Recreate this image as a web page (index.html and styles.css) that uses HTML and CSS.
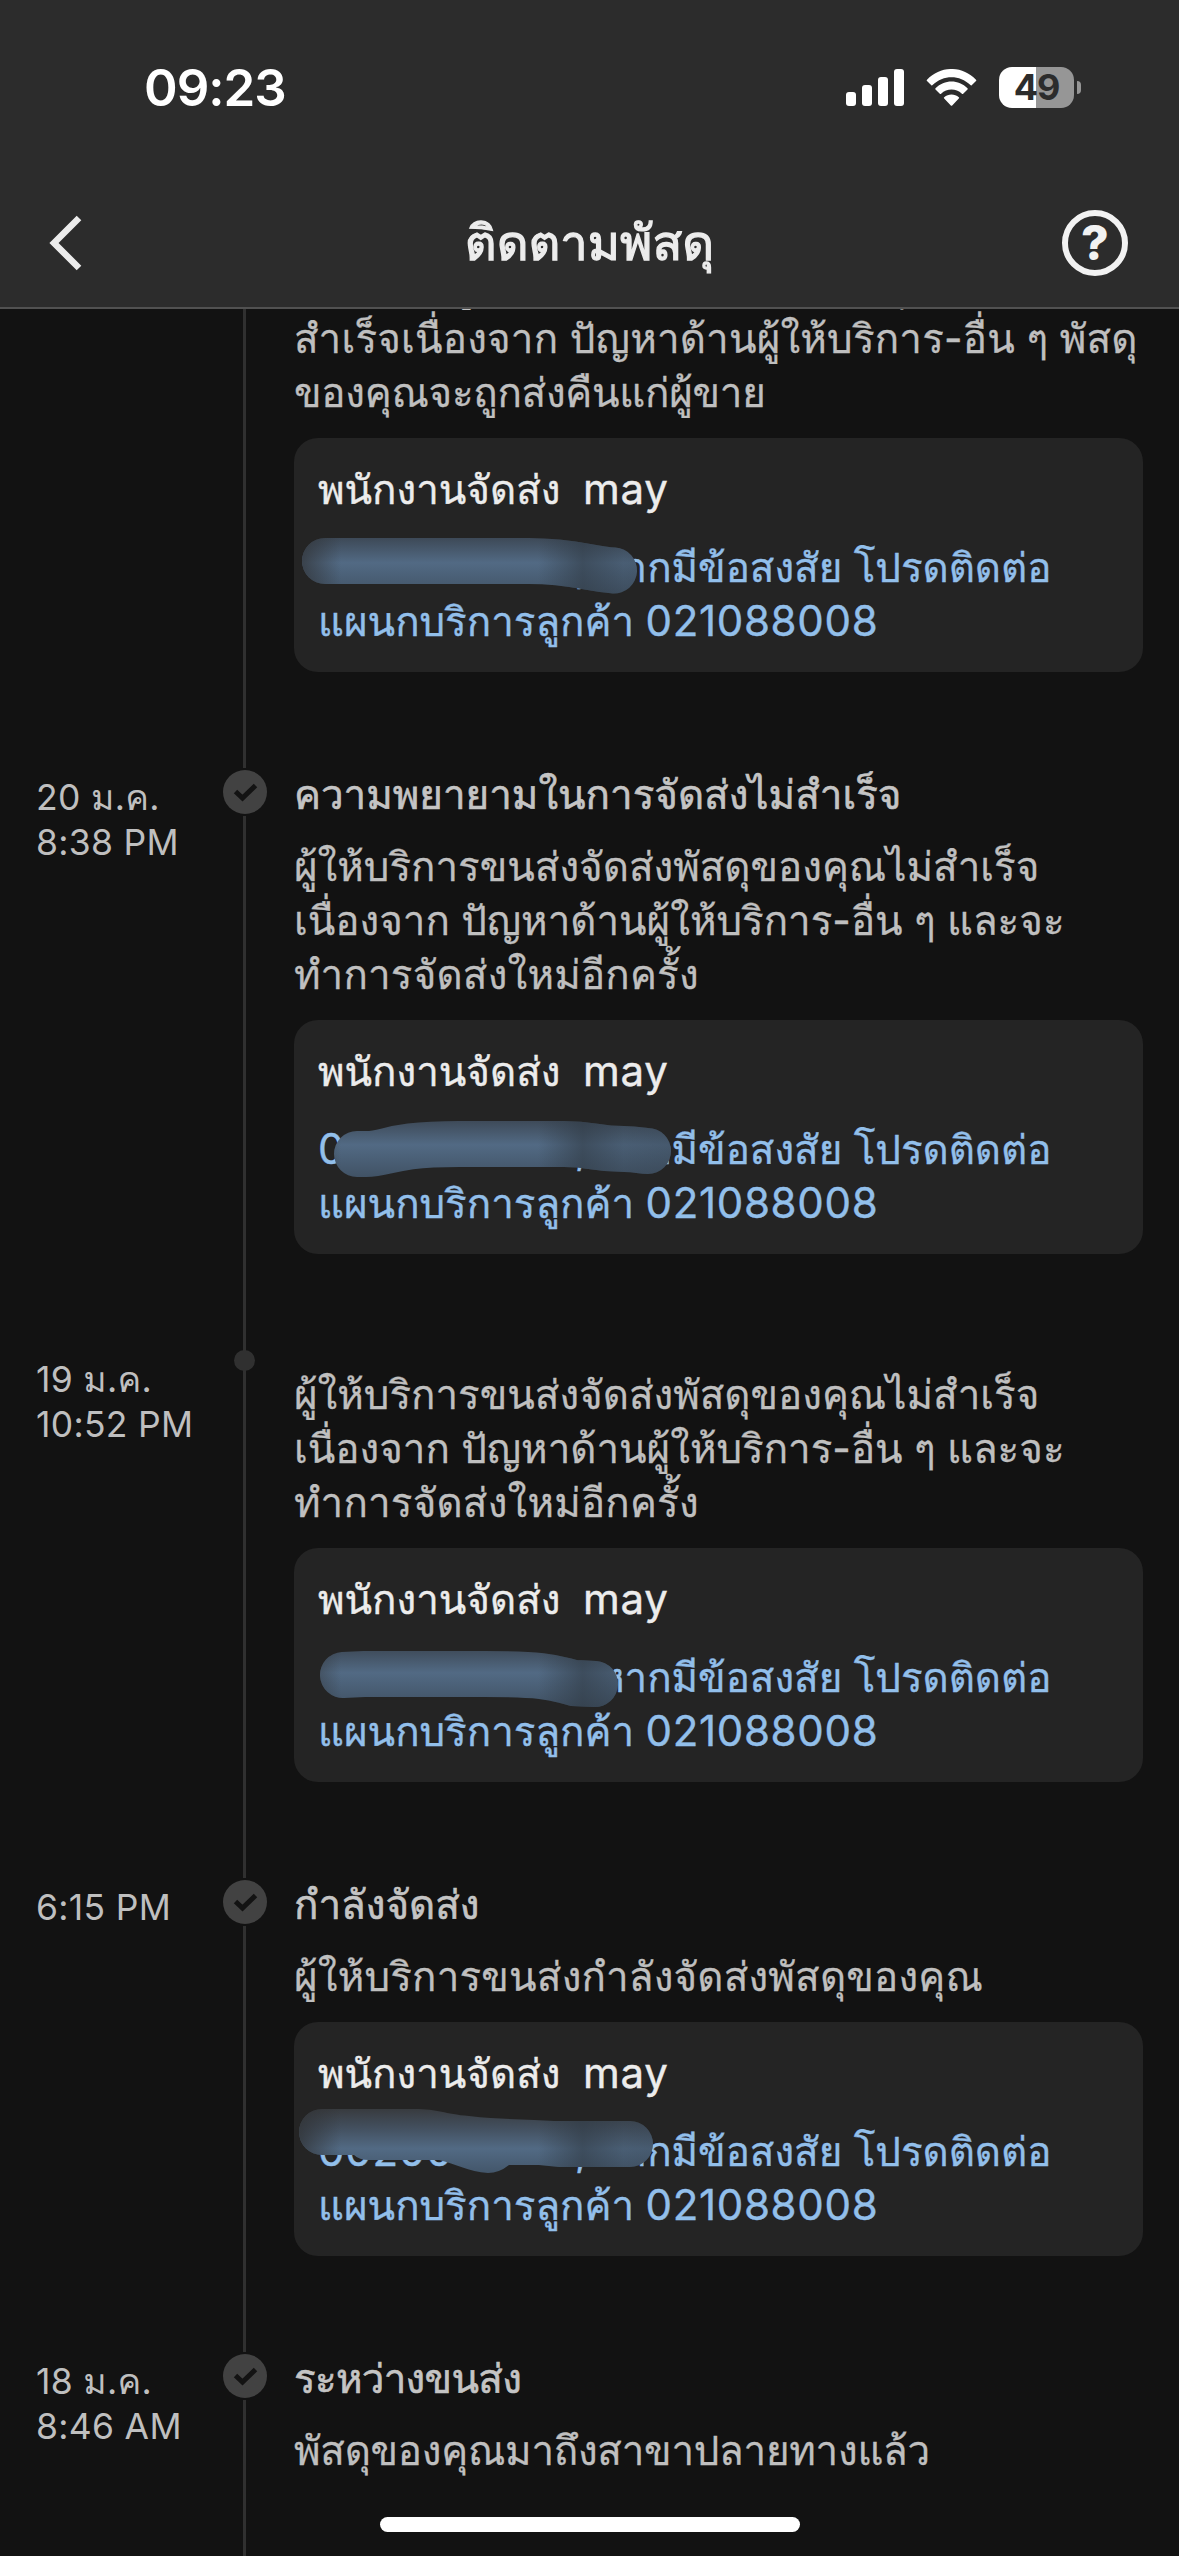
FILE: index.html
```html
<!DOCTYPE html>
<html lang="th">
<head>
<meta charset="utf-8">
<title>ติดตามพัสดุ</title>
<link rel="stylesheet" href="styles.css">
</head>
<body>
<svg class="defs" width="0" height="0" aria-hidden="true">
  <defs>
    <linearGradient id="tint" gradientUnits="userSpaceOnUse" x1="0" y1="96" x2="0" y2="160">
      <stop offset="0" stop-color="#3a4450"/>
      <stop offset=".45" stop-color="#526a84"/>
      <stop offset="1" stop-color="#3f5062"/>
    </linearGradient>
    <linearGradient id="tint-tall" gradientUnits="userSpaceOnUse" x1="0" y1="87" x2="0" y2="151">
      <stop offset="0" stop-color="#383b3f"/>
      <stop offset=".3" stop-color="#43505f"/>
      <stop offset=".62" stop-color="#526a84"/>
      <stop offset="1" stop-color="#43566a"/>
    </linearGradient>
    <linearGradient id="shade" gradientUnits="userSpaceOnUse" x1="6" y1="0" x2="378" y2="0">
      <stop offset="0" stop-color="#303235" stop-opacity=".75"/>
      <stop offset=".11" stop-color="#303235" stop-opacity="0"/>
      <stop offset=".64" stop-color="#303a44" stop-opacity="0"/>
      <stop offset=".76" stop-color="#303a44" stop-opacity=".6"/>
      <stop offset=".87" stop-color="#303a44" stop-opacity=".25"/>
      <stop offset="1" stop-color="#303a44" stop-opacity=".35"/>
    </linearGradient>
  </defs>
</svg>

<div class="screen">
  <header class="header">
    <div class="status">
      <span class="clock">09:23</span>
      <span class="indicators">
        <svg class="signal" width="58" height="37" viewBox="0 0 58 37" fill="#fff">
          <rect x="0" y="23" width="10" height="14" rx="3"/>
          <rect x="16" y="16" width="10" height="21" rx="3"/>
          <rect x="32" y="8" width="10" height="29" rx="3"/>
          <rect x="48" y="0" width="10" height="37" rx="3"/>
        </svg>
        <svg class="wifi" width="51" height="37" viewBox="0 0 51 37" fill="#fff">
          <path d="M1 10.7C14.6-3.6 36.4-3.6 50 10.7Q50.6 11.4 50 12L45.7 16.2Q45 16.7 44.4 16.1C33.8 5.6 17.2 5.6 6.6 16.1Q6 16.7 5.3 16.2L1 12Q.4 11.4 1 10.7Z"/>
          <path d="M9.500 19.300C18.400 10.300 32.600 10.300 41.500 19.300Q42.100 20 41.500 20.600L37.200 24.800Q36.500 25.400 35.900 24.800C30 19.200 21 19.200 15.100 24.800Q14.500 25.400 13.800 24.800L9.500 20.600Q8.900 20 9.500 19.300Z"/>
          <path d="M18.200 28.200C22.300 24.600 28.700 24.600 32.800 28.200Q33.500 28.800 32.800 29.500L26.200 36.400Q25.500 37.100 24.800 36.400L18.200 29.500Q17.500 28.800 18.200 28.200Z"/>
        </svg>
        <span class="battery"><span class="battery-body">49</span><span class="battery-tip"></span></span>
      </span>
    </div>
    <nav class="nav">
      <svg class="back" width="36" height="56" viewBox="0 0 36 56" fill="none" stroke="#ececec" stroke-width="6.500"><path d="M32 3L7 28L32 53"/></svg>
      <h1 class="heading">ติดตามพัสดุ</h1>
      <span class="help">?</span>
    </nav>
  </header>

  <main class="timeline">
    <section class="event first">
      <div class="date"></div>
      <div class="rail"></div>
      <div class="content">
        <p class="text">เนื่องจากผู้ให้บริการขนส่งจัดส่งพัสดุไม่<br><span class="loose">สำเร็จเนื่องจาก ปัญหาด้านผู้ให้บริการ-อื่น ๆ พัสดุ</span><br><span class="tight">ของคุณจะถูกส่งคืนแก่ผู้ขาย</span></p>
        <div class="card">
          <p class="name">พนักงานจัดส่ง&nbsp; <span class="latin">may</span></p>
          <p class="contact"><span class="latin phone"></span>, หากมีข้อสงสัย โปรดติดต่อ<br>แผนกบริการลูกค้า <span class="latin">021088008</span></p>
          <svg class="smudge" viewBox="0 0 849 234" fill="none" stroke-width="46" stroke-linecap="round">
            <path stroke="url(#tint)" d="M31 123H235C280 123 295 131 320 132.500"/>
            <path stroke="url(#shade)" d="M31 123H235C280 123 295 131 320 132.500"/>
          </svg>
        </div>
      </div>
    </section>

    <section class="event">
      <div class="date">20 ม.ค.<br>8:38 PM</div>
      <div class="rail"><span class="check"><svg width="44" height="44" viewBox="0 0 44 44" fill="none" stroke="#131313" stroke-width="5"><path d="M12.500 21.500L19.500 28L32.500 15.500"/></svg></span></div>
      <div class="content">
        <h2 class="title">ความพยายามในการจัดส่งไม่สำเร็จ</h2>
        <p class="text">ผู้ให้บริการขนส่งจัดส่งพัสดุของคุณไม่สำเร็จ<br>เนื่องจาก ปัญหาด้านผู้ให้บริการ-อื่น ๆ และจะ<br><span class="loose">ทำการจัดส่งใหม่อีกครั้ง</span></p>
        <div class="card">
          <p class="name">พนักงานจัดส่ง&nbsp; <span class="latin">may</span></p>
          <p class="contact"><span class="latin phone">0</span>, หากมีข้อสงสัย โปรดติดต่อ<br>แผนกบริการลูกค้า <span class="latin">021088008</span></p>
          <svg class="smudge" viewBox="0 0 849 234" fill="none" stroke-width="46" stroke-linecap="round">
            <path stroke="url(#tint)" d="M63 134H72C95 134 95 124 165 124H270C300 124 300 129 330 129C345 129 346 131 354 131"/>
            <path stroke="url(#shade)" d="M63 134H72C95 134 95 124 165 124H270C300 124 300 129 330 129C345 129 346 131 354 131"/>
          </svg>
        </div>
      </div>
    </section>

    <section class="event minor">
      <div class="date">19 ม.ค.<br>10:52 PM</div>
      <div class="rail"><span class="dot"></span></div>
      <div class="content">
        <p class="text">ผู้ให้บริการขนส่งจัดส่งพัสดุของคุณไม่สำเร็จ<br>เนื่องจาก ปัญหาด้านผู้ให้บริการ-อื่น ๆ และจะ<br><span class="loose">ทำการจัดส่งใหม่อีกครั้ง</span></p>
        <div class="card">
          <p class="name">พนักงานจัดส่ง&nbsp; <span class="latin">may</span></p>
          <p class="contact"><span class="latin phone"></span>, หากมีข้อสงสัย โปรดติดต่อ<br>แผนกบริการลูกค้า <span class="latin">021088008</span></p>
          <svg class="smudge" viewBox="0 0 849 234" fill="none" stroke-width="46" stroke-linecap="round">
            <path stroke="url(#tint)" d="M49 127L70 126H190C260 126 262 131 280 135L301 136"/>
            <path stroke="url(#shade)" d="M49 127L70 126H190C260 126 262 131 280 135L301 136"/>
          </svg>
        </div>
      </div>
    </section>

    <section class="event">
      <div class="date">6:15 PM</div>
      <div class="rail"><span class="check"><svg width="44" height="44" viewBox="0 0 44 44" fill="none" stroke="#131313" stroke-width="5"><path d="M12.500 21.500L19.500 28L32.500 15.500"/></svg></span></div>
      <div class="content">
        <h2 class="title">กำลังจัดส่ง</h2>
        <p class="text"><span class="loose">ผู้ให้บริการขนส่งกำลังจัดส่งพัสดุของคุณ</span></p>
        <div class="card">
          <p class="name">พนักงานจัดส่ง&nbsp; <span class="latin">may</span></p>
          <p class="contact"><span class="latin phone">00200</span>, หากมีข้อสงสัย โปรดติดต่อ<br>แผนกบริการลูกค้า <span class="latin">021088008</span></p>
          <svg class="smudge" viewBox="0 0 849 234">
            <path fill="url(#tint-tall)" d="M28 87H120C145 87 150 92 175 94C200 97 220 97 240 98L260 99H336A23 23 0 0 1 336 145H265L245 143H215Q205 151 194 151C175 150 160 141 145 138H75Q65 138 60 133H28A23 23 0 0 1 28 87Z"/>
            <path fill="url(#shade)" d="M28 87H120C145 87 150 92 175 94C200 97 220 97 240 98L260 99H336A23 23 0 0 1 336 145H265L245 143H215Q205 151 194 151C175 150 160 141 145 138H75Q65 138 60 133H28A23 23 0 0 1 28 87Z"/>
          </svg>
        </div>
      </div>
    </section>

    <section class="event last">
      <div class="date">18 ม.ค.<br>8:46 AM</div>
      <div class="rail"><span class="check"><svg width="44" height="44" viewBox="0 0 44 44" fill="none" stroke="#131313" stroke-width="5"><path d="M12.500 21.500L19.500 28L32.500 15.500"/></svg></span></div>
      <div class="content">
        <h2 class="title"><span class="tighter">ระหว่างขนส่ง</span></h2>
        <p class="text"><span class="tight">พัสดุของคุณมาถึงสาขาปลายทางแล้ว</span></p>
      </div>
    </section>
  </main>
  <div class="home-indicator"></div>
</div>
</body>
</html>
```
FILE: styles.css
```css
* { box-sizing: border-box; }

body {
  margin: 0;
  background: #121212;
  font-family: Inter, Loma, "Noto Sans Thai Looped", sans-serif;
}

h1, h2, p { margin: 0; font-weight: 400; }

svg { display: block; }

.defs { position: absolute; }

.screen {
  position: relative;
  display: flex;
  flex-direction: column;
  width: 1179px;
  height: 2556px;
  overflow: hidden;
}

.header {
  position: relative;
  z-index: 1;
  flex: none;
  height: 309px;
  background: #2c2c2c;
  border-bottom: 2px solid #515151;
}

.status {
  display: flex;
  justify-content: space-between;
  align-items: center;
  height: 175px;
  padding: 0 98px 0 144px;
}

.clock {
  color: #fff;
  font-size: 51px;
  font-weight: 600;
  letter-spacing: -1px;
}

.indicators { display: flex; align-items: center; gap: 22px; }

.battery { display: flex; align-items: center; gap: 3px; }

.battery-body {
  width: 75px;
  height: 41px;
  border-radius: 13px;
  background: linear-gradient(90deg, #fff 37px, #969696 37px);
  color: #2c2c2c;
  font-size: 36px;
  font-weight: 700;
  line-height: 41px;
  letter-spacing: -1px;
  text-align: center;
}

.battery-tip {
  width: 4px;
  height: 13px;
  border-radius: 0 5px 5px 0;
  background: #969696;
}

.nav {
  display: flex;
  align-items: center;
  justify-content: space-between;
  height: 136px;
  padding: 0 51px 0 47px;
}

.back { margin-right: 34px; }

.heading {
  color: #ececec;
  font-size: 49px;
  line-height: 60px;
  -webkit-text-stroke: 1.3px #ececec;
}

.help {
  width: 66px;
  height: 66px;
  border: 6px solid #f2f2f2;
  border-radius: 50%;
  color: #f2f2f2;
  font-size: 48px;
  font-weight: 800;
  line-height: 54px;
  text-align: center;
}

.timeline { flex: 1; min-height: 0; }

.event {
  display: grid;
  grid-template-columns: 220px 50px 849px;
}

.event .content { margin-left: 24px; width: 849px; padding-bottom: 96px; }

.event.first { margin-top: -51px; }
.event.minor .content { padding-top: 18px; }
.event.last { height: 204px; }

.date {
  padding: 7px 0 0 36px;
  color: #bfbfbf;
  font-size: 35.5px;
  line-height: 45px;
  letter-spacing: 0.3px;
}

.rail {
  display: flex;
  flex-direction: column;
  align-items: center;
  background: linear-gradient(#303030, #303030) 23px 0 / 3px 100% no-repeat;
}

.check {
  border-top: 2px solid #121212;
  border-bottom: 2px solid #121212;
  background: #121212;
}

.check svg { border-radius: 50%; background: #424242; }

.dot {
  width: 21px;
  height: 21px;
  margin-right: 1px;
  border-radius: 50%;
  background: #303030;
}

.title, .text, .name, .contact {
  font-size: 40.3px;
  line-height: 54px;
  white-space: nowrap;
}

.title { margin-bottom: 18px; color: #c4c4c4; -webkit-text-stroke: 0.6px #c4c4c4; }
.text { color: #bfbfbf; -webkit-text-stroke: 0.3px #bfbfbf; }

.loose { letter-spacing: 0.2px; }
.tight { letter-spacing: -0.25px; }
.tighter { letter-spacing: -0.7px; }

.card {
  position: relative;
  height: 234px;
  margin-top: 18px;
  padding: 25px 24px 23px;
  border-radius: 24px;
  background: #242424;
}

.name { margin-bottom: 24px; color: #ececec; -webkit-text-stroke: 0.4px #ececec; }
.contact { color: #92bfea; -webkit-text-stroke: 0.4px #92bfea; }

.latin { font-size: 42px; line-height: 0; letter-spacing: 0.7px; }
.phone { display: inline-block; width: 257px; }

.smudge {
  position: absolute;
  inset: 0;
  width: 849px;
  height: 234px;
}

.home-indicator {
  position: absolute;
  left: 380px;
  bottom: 24px;
  width: 420px;
  height: 15px;
  border-radius: 8px;
  background: #fff;
}
```
